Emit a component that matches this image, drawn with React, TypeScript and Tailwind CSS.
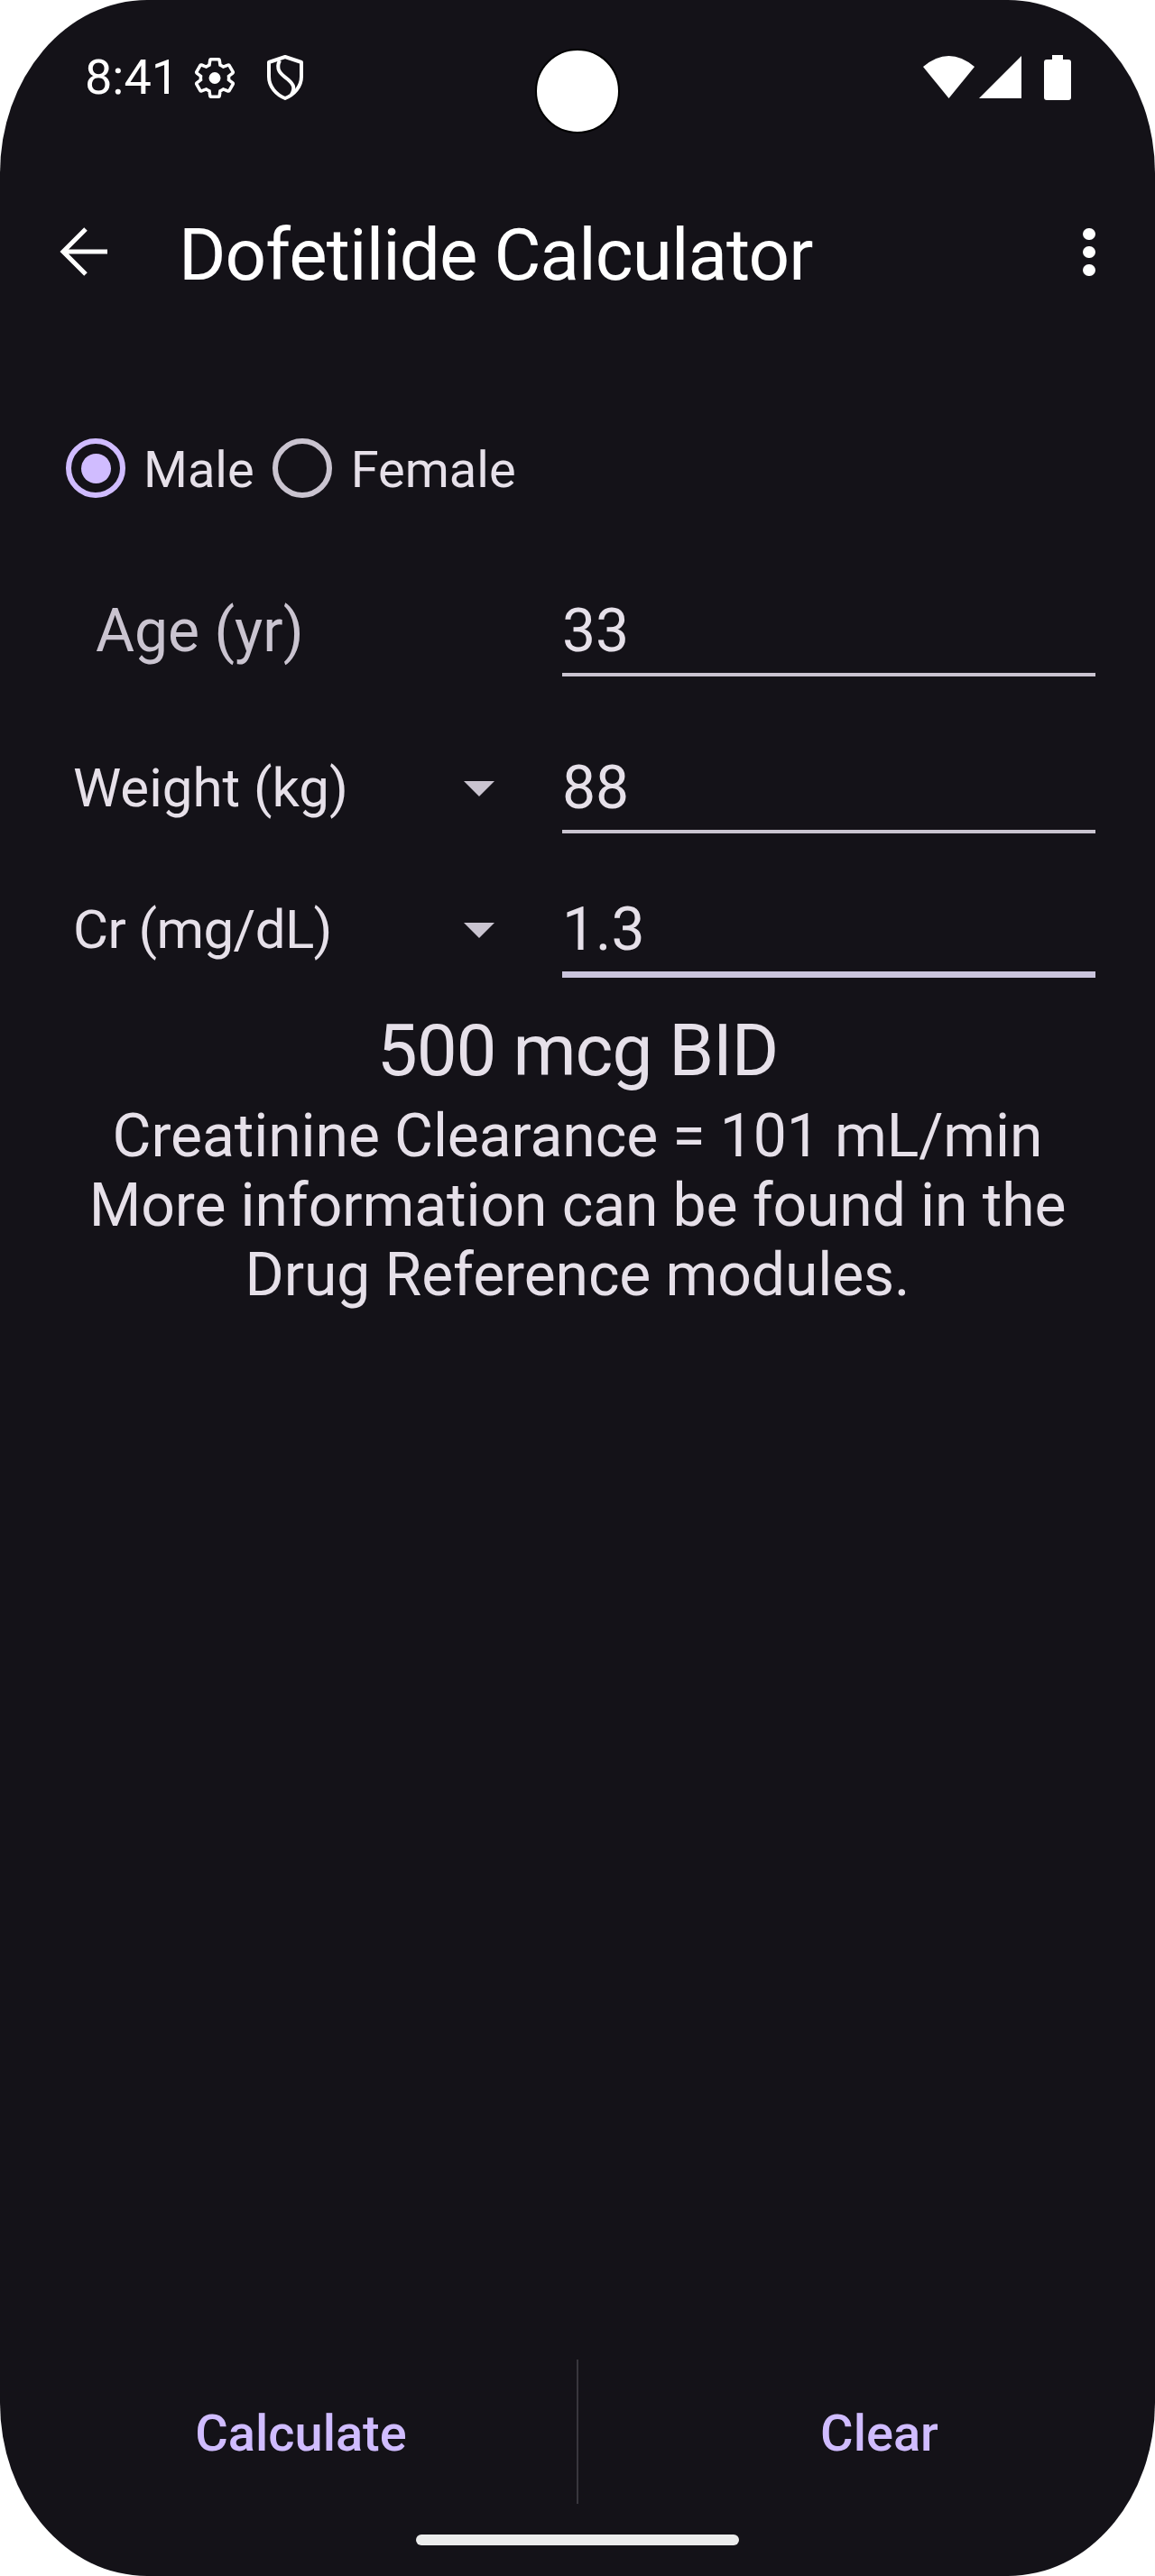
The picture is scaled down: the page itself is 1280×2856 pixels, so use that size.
function GearIcon() {
  return (
    <svg width="50" height="51" viewBox="0 0 24 24" fill="none" className="shrink-0">
      <path
        d="M19.43 12.98c.04-.32.07-.64.07-.98 0-.34-.03-.66-.07-.98l2.11-1.65c.19-.15.24-.42.12-.64l-2-3.46c-.09-.16-.26-.25-.44-.25-.06 0-.12.01-.17.03l-2.49 1c-.52-.4-1.08-.73-1.69-.98l-.38-2.65C14.46 2.18 14.25 2 14 2h-4c-.25 0-.46.18-.49.42l-.38 2.65c-.61.25-1.17.59-1.69.98l-2.49-1c-.06-.02-.12-.03-.18-.03-.17 0-.34.09-.43.25l-2 3.46c-.13.22-.07.49.12.64l2.11 1.65c-.04.32-.07.65-.07.98 0 .33.03.66.07.98l-2.11 1.65c-.19.15-.24.42-.12.64l2 3.46c.09.16.26.25.44.25.06 0 .12-.01.17-.03l2.49-1c.52.4 1.08.73 1.69.98l.38 2.65c.03.24.24.42.49.42h4c.25 0 .46-.18.49-.42l.38-2.65c.61-.25 1.17-.59 1.69-.98l2.49 1c.06.02.12.03.18.03.17 0 .34-.09.43-.25l2-3.46c.12-.22.07-.49-.12-.64l-2.11-1.65z"
        stroke="white"
        strokeWidth="1.7"
      />
      <circle cx="12" cy="12" r="3.1" fill="white" />
    </svg>
  );
}

function ShieldIcon() {
  return (
    <svg width="42" height="50" viewBox="0 0 42 50" fill="none" className="shrink-0">
      <path d="M21 2 L39 8 V24 C39 35 31 44 21 48 C11 44 3 35 3 24 V8 Z" stroke="white" strokeWidth="4" strokeLinejoin="round" />
      <path d="M15 6 C10 16 16 21 24 27 C31 33 32 37 28 44" stroke="white" strokeWidth="4" />
    </svg>
  );
}

function WifiIcon() {
  return (
    <svg width="57" height="47" viewBox="0 0 57 47" className="shrink-0">
      <path d="M28.5 47 L0 12 Q28.5 -12 57 12 Z" fill="white" />
    </svg>
  );
}

function SignalIcon() {
  return (
    <svg width="47" height="47" viewBox="0 0 47 47" className="shrink-0">
      <path d="M47 0 V47 H0 Z" fill="white" />
    </svg>
  );
}

function BatteryIcon() {
  return (
    <svg width="30" height="50" viewBox="0 0 30 50" className="shrink-0">
      <path d="M9 0 H21 V5 H27 Q30 5 30 8 V47 Q30 50 27 50 H3 Q0 50 0 47 V8 Q0 5 3 5 H9 Z" fill="white" />
    </svg>
  );
}

function BackArrow() {
  return (
    <svg width="54" height="54" viewBox="0 0 54 54" fill="none" className="shrink-0">
      <path d="M53 27 H4 M29 2 L4 27 L29 52" stroke="white" strokeWidth="5" />
    </svg>
  );
}

function Caret() {
  return (
    <svg width="34" height="17" viewBox="0 0 34 17" className="shrink-0">
      <path d="M0 0 H34 L17 17 Z" fill="#cac4d0" />
    </svg>
  );
}

function Radio({ checked }: { checked?: boolean }) {
  return (
    <span
      className={
        checked
          ? 'w-[66px] h-[66px] rounded-full border-[6px] border-[#d0bcff] flex items-center justify-center shrink-0'
          : 'w-[66px] h-[66px] rounded-full border-[6px] border-[#cac4d0] flex items-center justify-center shrink-0'
      }
    >
      {checked && <span className="w-[33px] h-[33px] rounded-full bg-[#d0bcff]" />}
    </span>
  );
}

interface FieldRowProps {
  label: string;
  labelClass?: string;
  value: string;
  focused?: boolean;
  caret?: boolean;
  top: string;
}

function FieldRow({ label, labelClass, value, focused, caret, top }: FieldRowProps) {
  return (
    <div className={top}>
      <div className="flex items-center h-[78px]">
        <div className="w-[550px] shrink-0 flex items-center justify-between pr-[75px]">
          {caret ? (
            <>
              <span className={`pl-[8px] text-[60px] leading-[70px] text-[#e6e0e9] ${labelClass ?? ''}`}>{label}</span>
              <Caret />
            </>
          ) : (
            <span className="pl-[33px] text-[66px] leading-[70px] text-[#cac4d0]">{label}</span>
          )}
        </div>
        <span className="text-[66px] leading-[78px] text-[#e6e0e9]">{value}</span>
      </div>
      <div className={focused ? 'ml-[550px] w-[591px] mt-[7px] h-[7px] bg-[#cac4dc]' : 'ml-[550px] w-[591px] mt-[7px] h-[4px] bg-[#cac4d0]'} />
    </div>
  );
}

export default function App() {
  return (
    <div className="h-[2856px] w-[1280px] bg-white overflow-hidden font-['Roboto',sans-serif]">
      <div className="relative h-full flex flex-col bg-[#141218] rounded-[163px/192px]">
        <div className="absolute left-[593px] top-[54px] w-[94px] h-[94px] rounded-full bg-white border-2 border-black" />

        <div className="h-[176px] shrink-0 flex items-start pt-[61px] pl-[94px] pr-[93px]">
          <span className="text-[54px] leading-[50px] text-white">8:41</span>
          <span className="ml-[15px]"><GearIcon /></span>
          <span className="ml-[32px]"><ShieldIcon /></span>
          <div className="ml-auto flex items-start gap-[5px] mt-[1px]">
            <WifiIcon />
            <SignalIcon />
            <span className="ml-[20px] -mt-[1px]"><BatteryIcon /></span>
          </div>
        </div>

        <div className="h-[206px] shrink-0 flex items-center pl-[66px] pr-[66px]">
          <BackArrow />
          <span className="ml-[78px] pt-[7px] text-[80px] leading-none tracking-[-0.9px] text-white">Dofetilide Calculator</span>
          <div className="ml-auto flex flex-col gap-[7px]">
            <span className="w-[14px] h-[13px] rounded-full bg-white" />
            <span className="w-[14px] h-[13px] rounded-full bg-white" />
            <span className="w-[14px] h-[13px] rounded-full bg-white" />
          </div>
        </div>

        <div className="pl-[73px]">
          <div className="mt-[104px] flex items-center h-[66px] text-[56px] leading-[66px] text-[#e6e0e9]">
            <Radio checked />
            <span className="ml-[20px] pt-[4px]">Male</span>
            <span className="ml-[20px]"><Radio /></span>
            <span className="ml-[21px] pt-[4px]">Female</span>
          </div>
          <FieldRow label="Age (yr)" value="33" top="pt-[109px]" />
          <FieldRow label="Weight (kg)" value="88" caret top="pt-[85px]" />
          <FieldRow label="Cr (mg/dL)" labelClass="tracking-[-0.6px]" value="1.3" focused caret top="pt-[68px]" />
        </div>

        <div className="flex flex-col items-center text-[#e6e0e9] mt-[35px]">
          <p className="text-[80px] leading-[92px] tracking-[-1px]">500 mcg BID</p>
          <div className="mt-[10px] text-center text-[66px] leading-[77px] tracking-[-0.1px]">
            <p>Creatinine Clearance = 101 mL/min</p>
            <p>More information can be found in the</p>
            <p>Drug Reference modules.</p>
          </div>
        </div>

        <div className="mt-auto h-[240px] flex flex-col">
          <div className="h-[160px] flex items-stretch">
            <div className="flex-1 flex items-center justify-center pl-[28px] pt-[3px] text-[56px] font-medium text-[#d0bcff]">Calculate</div>
            <div className="w-[2px] bg-[#38363d]" />
            <div className="flex-1 flex items-center justify-center pl-[28px] pt-[3px] text-[56px] font-medium text-[#d0bcff]">Clear</div>
          </div>
          <div className="flex justify-center mt-[34px]">
            <div className="w-[358px] h-[12px] rounded-full bg-[#ececec]" />
          </div>
        </div>
      </div>
    </div>
  );
}
